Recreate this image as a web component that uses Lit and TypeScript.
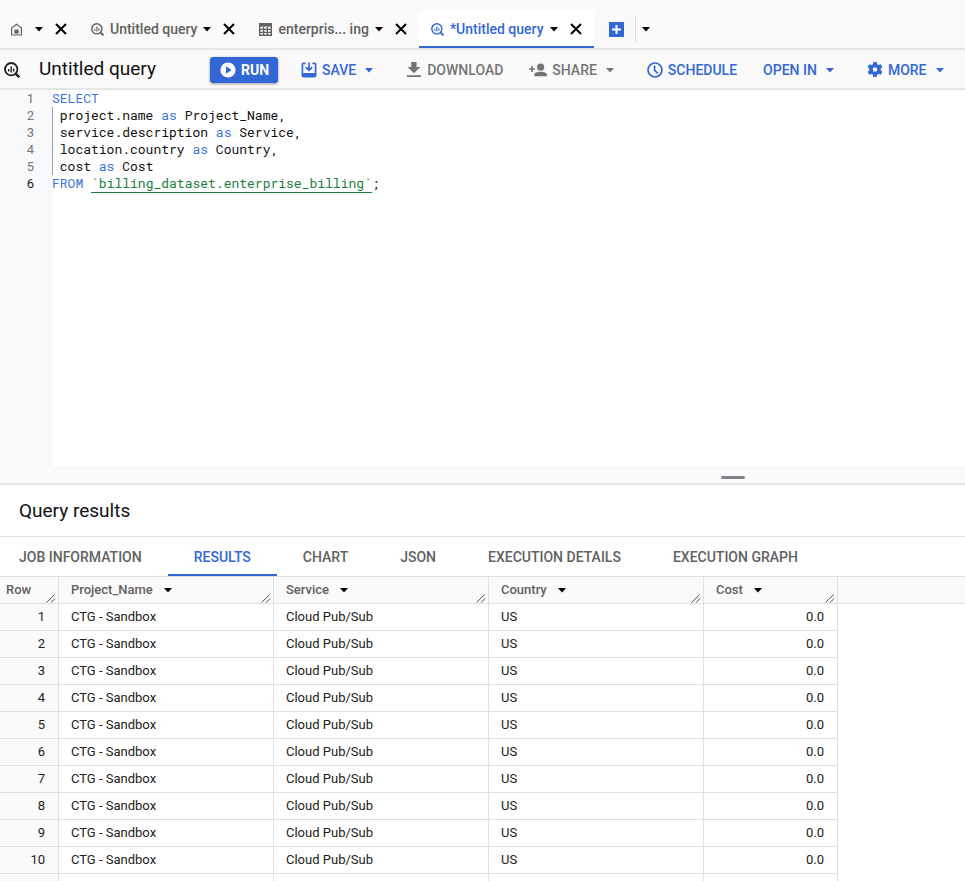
import { LitElement, html, css, svg, nothing } from "lit";
import { customElement, state } from "lit/decorators.js";
import { classMap } from "lit/directives/class-map.js";

const lens = (size: number) => html`<svg width=${size} height=${size} viewBox="0 0 16 16" fill="none" stroke="currentColor" aria-hidden="true">
  <circle cx="7.2" cy="7.2" r="6.2" stroke-width="1.8" />
  <path d="M11.6 11.6 15.3 15.3" stroke-width="2.4" />
  <path d="M4.7 7V9.6M7.2 4.2V10.6M9.7 6.6V9.6" stroke-width="1.4" />
</svg>`;

const caret = html`<svg class="caret" width="8" height="5" viewBox="0 0 8 5" aria-hidden="true"><path d="M0 0h8L4 4.4z" fill="currentColor" /></svg>`;

const cross = html`<svg width="12" height="12" viewBox="0 0 12 12" aria-hidden="true"><path d="M1 1 11 11M11 1 1 11" stroke="currentColor" stroke-width="2" /></svg>`;

const home = html`<svg width="13" height="13" viewBox="0 0 13 13" aria-hidden="true">
  <path d="M1.6 12V5L6.5 1.3 11.4 5v7z" fill="none" stroke="currentColor" stroke-width="1.2" />
  <path d="M4.3 6.6h4.4v4H4.3z" fill="currentColor" />
</svg>`;

const grid = html`<svg width="13" height="13" viewBox="0 0 13 13" aria-hidden="true">
  <path d="M.7 .7h11.6v11.6H.7z" fill="none" stroke="currentColor" stroke-width="1.4" />
  <path d="M1 1h11v2.6H1z" fill="currentColor" />
  <path d="M1 6.4h11M1 9.3h11M4.6 3.5V12M8.4 3.5V12" stroke="currentColor" stroke-width="1.3" />
</svg>`;

const icons: Record<string, unknown> = {
  save: svg`<path d="M4.6 1.4H2.6Q1.4 1.4 1.4 2.6v10.8q0 1.2 1.2 1.2h10.8q1.2 0 1.2-1.2V2.6q0-1.2-1.2-1.2h-2" fill="none" stroke="currentColor" stroke-width="1.7"/><path d="M1.4 11h13.2v3.6H1.4z" fill="currentColor"/><path d="M8 .4v7.6M4.8 5.2 8 8.4 11.2 5.2" fill="none" stroke="currentColor" stroke-width="1.7"/>`,
  download: svg`<path d="M5.2 0h5.4v5h3.8L8 11.2 1.5 5h3.7zM1 13.2h14V15H1z" fill="currentColor"/>`,
  schedule: svg`<circle cx="8" cy="8" r="7" fill="none" stroke="currentColor" stroke-width="1.7"/><path d="M7.6 3.6V8.3L10.8 11.4" fill="none" stroke="currentColor" stroke-width="1.7"/>`,
  more: svg`<path fill-rule="evenodd" fill="currentColor" d="M6.3 0h3.4l.4 2.2 1.5.9 2.1-.8 1.7 2.9-1.7 1.4v1.8l1.7 1.4-1.7 2.9-2.1-.8-1.5.9-.4 2.2H6.3l-.4-2.2-1.5-.9-2.1.8-1.7-2.9 1.7-1.4V6.6L.6 5.2l1.7-2.9 2.1.8 1.5-.9zM8 5.2a2.3 2.3 0 1 0 0 4.6 2.3 2.3 0 0 0 0-4.6z"/>`,
};

const shareIcon = html`<svg width="18" height="14" viewBox="0 0 18 14" aria-hidden="true">
  <circle cx="11.6" cy="4.2" r="3.6" fill="currentColor" />
  <path d="M5.2 13.2v-1.5c0-4 12.8-4 12.8 0v1.5zM2.2 3h1.6v2.2H6v1.6H3.8V9H2.2V6.8H0V5.2h2.2z" fill="currentColor" />
</svg>`;

const handle = html`<svg class="handle" width="10" height="9" viewBox="0 0 10 9" aria-hidden="true"><path d="M.5 8.5 8.7.5M5 8.5 9.2 4.5" stroke="#555" stroke-width="1" /></svg>`;

interface Tab { icon: unknown; label: string; active?: boolean }

const TABS: Tab[] = [
  { icon: home, label: "" },
  { icon: lens(13), label: "Untitled query" },
  { icon: grid, label: "enterpris... ing" },
  { icon: lens(13), label: "*Untitled query", active: true },
];

interface Action { icon?: string; label: string; menu?: boolean; muted?: boolean }

const ACTIONS: Action[] = [
  { icon: "save", label: "SAVE", menu: true },
  { icon: "download", label: "DOWNLOAD", muted: true },
  { icon: "share", label: "SHARE", menu: true, muted: true },
  { icon: "schedule", label: "SCHEDULE" },
  { label: "OPEN IN", menu: true },
  { icon: "more", label: "MORE", menu: true },
];

const VIEWS = ["JOB INFORMATION", "RESULTS", "CHART", "JSON", "EXECUTION DETAILS", "EXECUTION GRAPH"];
const COLUMNS = ["Project_Name", "Service", "Country", "Cost"];
const ROWS = Array.from({ length: 10 }, () => ["CTG - Sandbox", "Cloud Pub/Sub", "US", "0.0"]);

const kw = (t: string) => html`<span class="kw">${t}</span>`;
const LINES = [
  kw("SELECT"),
  html` project.name ${kw("as")} Project_Name,`,
  html` service.description ${kw("as")} Service,`,
  html` location.country ${kw("as")} Country,`,
  html` cost ${kw("as")} Cost`,
  html`${kw("FROM")} <span class="ref">${"`billing_dataset.enterprise_billing`"}</span>;`,
];

@customElement("app-root")
export class AppRoot extends LitElement {
  @state() private view = "RESULTS";

  static styles = css`
    :host {
      display: flex;
      flex-direction: column;
      height: 100vh;
      overflow: hidden;
      background: #fff;
      color: #212121;
      font-family: Roboto, "Liberation Sans", sans-serif;
      font-size: 13px;
    }
    * { box-sizing: border-box; }
    svg { display: block; flex: none; }
    button {
      display: flex;
      align-items: center;
      flex: none;
      margin: 0;
      padding: 0;
      border: 0;
      background: none;
      color: inherit;
      font: inherit;
      white-space: nowrap;
      cursor: pointer;
    }
    .tabs {
      display: flex;
      flex: none;
      align-items: flex-end;
      height: 50px;
      padding-top: 10px;
      background: #fafafa;
      border-bottom: 2px solid #e6e6e6;
    }
    .tab {
      display: flex;
      align-items: center;
      flex: none;
      height: 38px;
      padding: 0 12px;
      font-size: 14px;
      font-weight: 500;
      color: #616161;
    }
    .tab.compact { padding-left: 10px; }
    .tab.active {
      background: #fff;
      color: #3367d6;
      border-radius: 4px 4px 0 0;
      box-shadow: inset 0 -2px #3367d6;
    }
    .name { gap: 6px; }
    .menu, .close { color: #000; }
    .menu { margin-left: 6px; }
    .compact .menu { margin-left: 12px; }
    .close { margin-left: 12px; }
    .new { height: 38px; margin-left: 15px; color: #3367d6; }
    .list {
      height: 26px;
      margin: 0 0 6px 11px;
      padding-left: 6px;
      border-left: 1px solid #dadada;
      color: #000;
    }
    .toolbar {
      display: flex;
      flex: none;
      align-items: center;
      height: 40px;
      padding: 2px 4px 0;
      background: #fafafa;
      border-bottom: 2px solid #e6e6e6;
    }
    .toolbar > svg { color: #212121; }
    h1 {
      flex: none;
      width: 171px;
      margin: 0;
      padding: 0 0 2px 19px;
      font-size: 19px;
      line-height: 24px;
      font-weight: 400;
      color: #111;
    }
    h1, h2 { white-space: nowrap; }
    .run {
      gap: 5px;
      height: 26px;
      margin: 0 23px 0 19px;
      padding: 0 9px 0 10px;
      border-radius: 3px;
      background: #3367d6;
      box-shadow: 0 1px 3px rgba(0, 0, 0, 0.4);
      color: #fff;
      font-size: 14px;
      font-weight: 700;
    }
    .actions { display: flex; gap: 26px; }
    .action { gap: 5px; font-size: 14px; font-weight: 500; color: #3367d6; }
    .action.muted { color: #757575; }
    .action .caret { margin-left: 4px; }
    .action.drop { padding-right: 7px; }
    .editor {
      display: flex;
      flex: 376 1 0;
      min-height: 0;
      overflow: hidden;
      font-family: "Roboto Mono", "DejaVu Sans Mono", monospace;
      font-size: 13px;
      line-height: 17px;
    }
    .gutter {
      width: 52px;
      margin: 0;
      padding: 0 18px 0 0;
      list-style: none;
      text-align: right;
      font-family: Roboto, sans-serif;
      background: #f8f9fb;
      color: #757575;
    }
    .gutter .current { color: #212121; }
    .code {
      flex: 1;
      margin: 0;
      color: #111;
      font: inherit;
      outline: none;
    }
    .line { height: 17px; }
    .line.nested { box-shadow: inset 1px 0 #9e9e9e; }
    .kw { color: #3a73d9; }
    .ref { color: #188038; border-bottom: 1px solid #188038; }
    .splitter {
      display: flex;
      flex: none;
      align-items: center;
      height: 19px;
      padding: 5px 0 0 721px;
      background: #fafafa;
      border-bottom: 2px solid #e6e6e6;
    }
    .grip { width: 24px; height: 3px; border-radius: 2px; background: #80868b; }
    .results {
      display: flex;
      flex-direction: column;
      flex: 396 1 0;
      min-height: 0;
      overflow: hidden;
    }
    h2 {
      flex: none;
      margin: 0;
      padding: 13px 19px;
      border-bottom: 1px solid #e0e0e0;
      font-size: 19px;
      line-height: 25px;
      font-weight: 400;
      color: #111;
    }
    .views { display: flex; flex: none; height: 40px; border-bottom: 1px solid #e0e0e0; }
    .view { padding: 0 26px; font-size: 14px; font-weight: 500; color: #616161; }
    .view:first-child { padding-left: 19px; }
    .view.active { color: #3367d6; box-shadow: inset 0 -2px #3367d6; }
    table {
      width: 100%;
      flex: none;
      table-layout: fixed;
      border-collapse: separate;
      border-spacing: 0;
    }
    th, td {
      height: 27px;
      padding: 0 13px 0 12px;
      border: solid #e0e0e0;
      border-width: 0 1px 1px 0;
      font-size: 13px;
      line-height: 16px;
      font-weight: 400;
      text-align: left;
      white-space: nowrap;
    }
    thead th {
      position: relative;
      background: #fafafa;
      color: #616161;
      font-weight: 500;
    }
    .sort { gap: 11px; }
    .sort .caret { color: #000; }
    .handle { position: absolute; right: 2px; bottom: 0; }
    .row-head { width: 59px; padding-left: 6px; }
    tbody th { background: #fafafa; text-align: right; }
    .wide { width: 215px; }
    .cost { width: 134px; }
    td.cost { text-align: right; }
    .rest { border-right: 0; }
    td.rest { border-bottom: 0; }
  `;

  private renderTab(tab: Tab) {
    return html`<div class=${classMap({ tab: true, compact: !tab.label, active: !!tab.active })}>
      <button class="name" aria-label=${tab.label || "Home"}>${tab.icon}${tab.label ? html`<span>${tab.label}</span>` : nothing}</button>
      <button class="menu" aria-label="Tab menu">${caret}</button>
      <button class="close" aria-label="Close tab">${cross}</button>
    </div>`;
  }

  private renderAction(a: Action) {
    const icon = !a.icon
      ? nothing
      : a.icon === "share"
        ? shareIcon
        : html`<svg width="16" height="16" viewBox="0 0 16 16" aria-hidden="true">${icons[a.icon]}</svg>`;
    return html`<button class=${classMap({ action: true, muted: !!a.muted, drop: !!a.menu })}>${icon}<span>${a.label}</span>${a.menu ? caret : nothing}</button>`;
  }

  private renderRow(head: string | number, cells: string[]) {
    return html`<tr>
      <th scope="row">${head}</th>
      ${cells.map((v, c) => html`<td class=${c === 3 ? "cost" : "wide"}>${v}</td>`)}
      <td class="rest"></td>
    </tr>`;
  }

  render() {
    return html`
      <nav class="tabs">
        ${TABS.map((t) => this.renderTab(t))}
        <button class="new" aria-label="New query">
          <svg width="15" height="15" viewBox="0 0 15 15" aria-hidden="true"><path d="M0 0h15v15H0z" fill="currentColor" /><path d="M7.5 3v9M3 7.5h9" stroke="#fff" stroke-width="2" /></svg>
        </button>
        <button class="list" aria-label="All tabs">${caret}</button>
      </nav>
      <header class="toolbar">
        ${lens(16)}
        <h1>Untitled query</h1>
        <button class="run">
          <svg width="16" height="16" viewBox="0 0 16 16" aria-hidden="true"><circle cx="8" cy="8" r="7.6" fill="#fff" /><path d="M6 4.2v7.6L11.6 8z" fill="#3367d6" /></svg>
          <span>RUN</span>
        </button>
        <div class="actions">${ACTIONS.map((a) => this.renderAction(a))}</div>
      </header>
      <section class="editor">
        <ol class="gutter">${LINES.map((_, i) => html`<li class=${classMap({ current: i === 5 })}>${i + 1}</li>`)}</ol>
        <pre class="code" contenteditable="true" role="textbox" aria-multiline="true" aria-label="Query editor" spellcheck="false">${LINES.map(
          (l, i) => html`<div class=${classMap({ line: true, nested: i > 0 && i < 5 })}>${l}</div>`
        )}</pre>
      </section>
      <div class="splitter" role="separator"><div class="grip"></div></div>
      <section class="results">
        <h2>Query results</h2>
        <div class="views" role="tablist">
          ${VIEWS.map(
            (v) => html`<button role="tab" aria-selected=${v === this.view} class=${classMap({ view: true, active: v === this.view })} @click=${() => (this.view = v)}>${v}</button>`
          )}
        </div>
        <table>
          <thead>
            <tr>
              <th class="row-head" scope="col">Row${handle}</th>
              ${COLUMNS.map((c) => html`<th class=${c === "Cost" ? "cost" : "wide"} scope="col"><button class="sort">${c}${caret}</button>${handle}</th>`)}
              <th class="rest"></th>
            </tr>
          </thead>
          <tbody>
            ${ROWS.map((row, i) => this.renderRow(i + 1, row))}
            ${this.renderRow("", ["", "", "", ""])}
          </tbody>
        </table>
      </section>
    `;
  }
}
